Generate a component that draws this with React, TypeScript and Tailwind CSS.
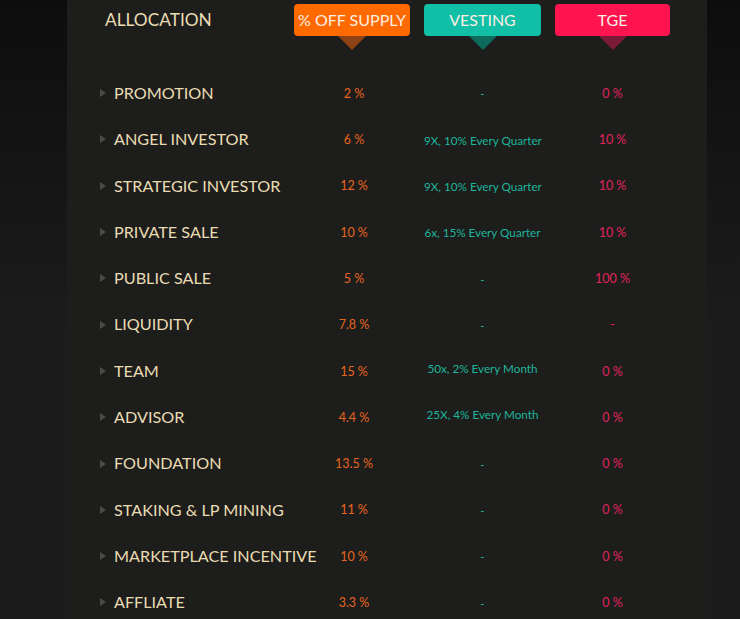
const rows = [
  { name: 'PROMOTION', off: '2 %', vest: '-', tge: '0 %' },
  { name: 'ANGEL INVESTOR', off: '6 %', vest: '9X, 10% Every Quarter', tge: '10 %' },
  { name: 'STRATEGIC INVESTOR', off: '12 %', vest: '9X, 10% Every Quarter', tge: '10 %' },
  { name: 'PRIVATE SALE', off: '10 %', vest: '6x, 15% Every Quarter', tge: '10 %' },
  { name: 'PUBLIC SALE', off: '5 %', vest: '-', tge: '100 %' },
  { name: 'LIQUIDITY', off: '7.8 %', vest: '-', tge: '-' },
  { name: 'TEAM', off: '15 %', vest: '50x, 2% Every Month', tge: '0 %', up: true },
  { name: 'ADVISOR', off: '4.4 %', vest: '25X, 4% Every Month', tge: '0 %', up: true },
  { name: 'FOUNDATION', off: '13.5 %', vest: '-', tge: '0 %' },
  { name: 'STAKING & LP MINING', off: '11 %', vest: '-', tge: '0 %' },
  { name: 'MARKETPLACE INCENTIVE', off: '10 %', vest: '-', tge: '0 %' },
  { name: 'AFFLIATE', off: '3.3 %', vest: '-', tge: '0 %' },
];

const Badge = ({ label, bg, arrow }: { label: string; bg: string; arrow: string }) => (
  <div className="flex flex-col items-center">
    <div className={`w-full h-8 rounded-[4px] flex items-center justify-center text-[16px] text-[#fbeee2] ${bg}`}>
      {label}
    </div>
    <div className={`w-0 h-0 border-l-[14px] border-r-[14px] border-t-[14px] border-l-transparent border-r-transparent ${arrow}`}></div>
  </div>
);

export default function App() {
  return (
    <div
      className="w-[740px] h-[619px] overflow-hidden bg-[linear-gradient(to_bottom,#0d0d0d_0px,#1c1c1c_330px,#1c1c1c_619px)]"
      style={{ fontFamily: 'Lato, "Open Sans", sans-serif' }}
    >
      <div className="ml-[67px] w-[640px] h-full bg-[#1d1d1c] pl-[33px] pt-[4px]">
        {/* header */}
        <div className="grid grid-cols-[180px_116px_117px_115px] gap-x-[14px] items-start">
          <div className="pl-[5px] h-8 flex items-center text-[17.3px] text-[#eadcb2]">ALLOCATION</div>
          <Badge label="% OFF SUPPLY" bg="bg-[#ff6a00]" arrow="border-t-[#8f4215]" />
          <Badge label="VESTING" bg="bg-[#10bfa6]" arrow="border-t-[#0d6b5d]" />
          <Badge label="TGE" bg="bg-[#ff1450]" arrow="border-t-[#7c1b38]" />
        </div>

        {/* rows */}
        <div className="mt-[20px]">
          {rows.map((r) => (
            <div key={r.name} className="grid grid-cols-[180px_116px_117px_115px] gap-x-[14px] items-center h-[46.3px]">
              <div className="flex items-center whitespace-nowrap">
                <span className="w-0 h-0 border-t-[4px] border-b-[4px] border-l-[6px] border-t-transparent border-b-transparent border-l-[#4a4a48] mr-[8px]"></span>
                <span className="text-[16.2px] text-[#eadcb2]">{r.name}</span>
              </div>
              <div className="text-center text-[12.5px] text-[#e8661c] pt-[2px] pl-[4px]">{r.off}</div>
              <div className={`text-center text-[11.7px] text-[#1db59b] whitespace-nowrap ${r.up ? 'pb-[4px]' : 'pt-[2px]'}`}>{r.vest}</div>
              <div className="text-center text-[12.5px] text-[#e0245a] pt-[2px]">{r.tge}</div>
            </div>
          ))}
        </div>
      </div>
    </div>
  );
}
